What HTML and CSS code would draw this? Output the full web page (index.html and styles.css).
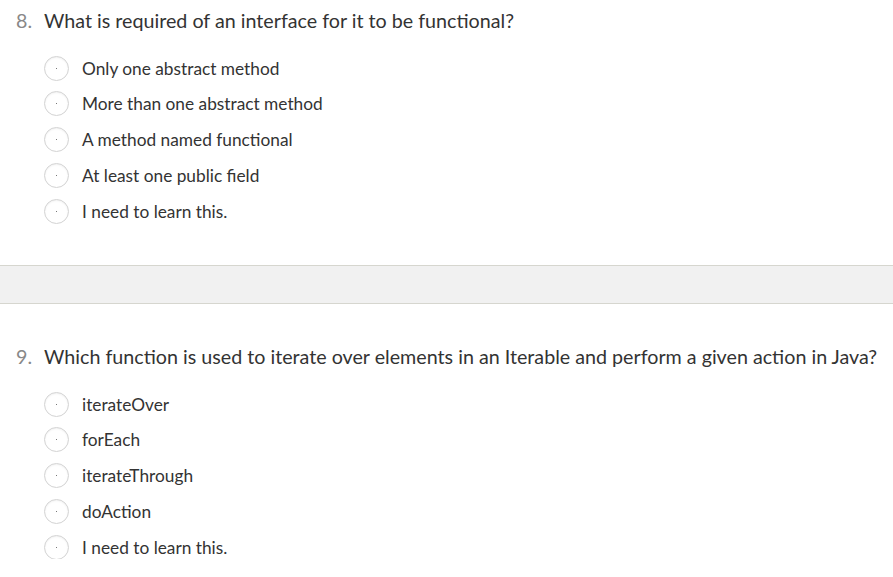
FILE: index.html
```html
<!DOCTYPE html>
<html>
<head>
<meta charset="utf-8">
<link rel="stylesheet" href="styles.css">
</head>
<body>
<section class="question q-first">
  <h2 class="q-title"><span class="q-num">8.</span><span class="q-text">What is required of an interface for it to be functional?</span></h2>
  <ul class="options">
    <li class="option"><span class="radio"></span><span class="label">Only one abstract method</span></li>
    <li class="option"><span class="radio"></span><span class="label">More than one abstract method</span></li>
    <li class="option"><span class="radio"></span><span class="label">A method named functional</span></li>
    <li class="option"><span class="radio"></span><span class="label">At least one public field</span></li>
    <li class="option"><span class="radio"></span><span class="label">I need to learn this.</span></li>
  </ul>
</section>
<div class="divider"></div>
<section class="question q-second">
  <h2 class="q-title"><span class="q-num">9.</span><span class="q-text">Which function is used to iterate over elements in an Iterable and perform a given action in Java?</span></h2>
  <ul class="options">
    <li class="option"><span class="radio"></span><span class="label">iterateOver</span></li>
    <li class="option"><span class="radio"></span><span class="label">forEach</span></li>
    <li class="option"><span class="radio"></span><span class="label">iterateThrough</span></li>
    <li class="option"><span class="radio"></span><span class="label">doAction</span></li>
    <li class="option"><span class="radio"></span><span class="label">I need to learn this.</span></li>
  </ul>
</section>
</body>
</html>
```
FILE: styles.css
```css
html, body {
  margin: 0;
  padding: 0;
  background: #fff;
  font-family: Lato, "Open Sans", sans-serif;
  color: #333;
}
.question {
  padding: 0 0 0 16px;
}
.q-first {
  padding-top: 8px;
  height: 256px;
  box-sizing: border-box;
}
.q-second {
  padding-top: 40px;
}
.q-title {
  margin: 0;
  font-weight: 400;
  font-size: 19.7px;
  line-height: 26px;
  display: flex;
}
.q-num {
  color: #888;
  width: 28px;
}
.q-text {
  color: #333;
}
.options {
  list-style: none;
  margin: 22px 0 0 28px;
  padding: 0;
  display: flex;
  flex-direction: column;
  gap: 11.8px;
}
.option {
  display: flex;
  align-items: center;
  height: 24px;
  font-size: 17.3px;
}
.radio {
  width: 23px;
  height: 23px;
  border: 1px solid #d3d3d3;
  border-radius: 50%;
  margin-right: 13px;
  position: relative;
  flex: none;
  box-shadow: inset 0 1px 2px rgba(0, 0, 0, 0.06);
}
.radio::after {
  content: "";
  position: absolute;
  left: 11px;
  top: 11px;
  width: 1px;
  height: 1px;
  background: #777;
}
.label {
  color: #333;
}
.divider {
  margin-top: 9px;
  height: 37px;
  background: #f1f1f1;
  border-top: 1px solid #d6d6cf;
  border-bottom: 1px solid #d6d6cf;
}
```
